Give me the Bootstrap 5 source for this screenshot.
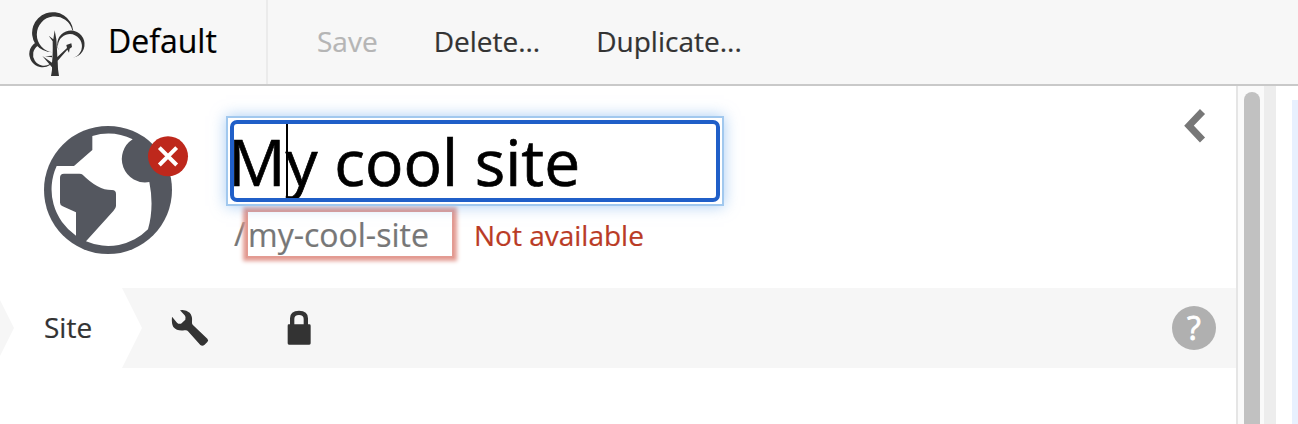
<!DOCTYPE html>
<html lang="en">
<head>
<meta charset="utf-8">
<title>My cool site</title>
<meta name="viewport" content="width=device-width, initial-scale=1">
<link rel="stylesheet" href="https://cdn.jsdelivr.net/npm/bootstrap@5.3.0/dist/css/bootstrap.min.css">
<style>
body{font-family:"Open Sans","Noto Sans",sans-serif;color:#333;background:#fff;height:424px;-webkit-text-stroke:.2px currentColor}
svg{display:block;flex:none}
.topbar{height:86px;background:#f7f7f7;border-bottom:2px solid #c9c9c9}
.brand{width:268px;border-right:2px solid #ebebeb;padding-left:20px;color:#000;font-size:32px}
.brand span{margin-left:13px;line-height:44px;margin-top:-3px}
.act{font-size:28px;line-height:40px;color:#333;margin-top:-2px}
.act[disabled]{color:#b5b5b5;opacity:1}
.form-col{width:1238px;border-right:2px solid #e5e5e5}
.head{height:202px;padding:22px 30px 0 44px}
.globe{margin-top:18px}
.names{margin-left:36px;margin-top:8px}
.name-box{width:498px;height:90px;border:2px solid #a1c8ee;box-shadow:0 0 14px rgba(110,170,235,.6)}
.name-inner{height:82px;margin:2px;position:relative}
.name-inner::after{content:"";position:absolute;inset:0;border:4px solid #205fc8;border-radius:7px}
.name-text{height:78px;width:488px;overflow:hidden;white-space:pre;color:#000;font-size:64px;line-height:84px;text-indent:-2px;-webkit-text-stroke:.7px #000}
.caret{position:absolute;left:56px;top:4px;width:2px;height:74px;background:#000}
.slug{margin:4px 0 0 8px;font-size:32px;line-height:48px;color:#777}
.slash{width:12px}
.slug-box{width:208px;height:48px;border:2px solid #e39b92;box-shadow:0 0 4px 3px #e39b92;background:#fff;line-height:46px;white-space:nowrap}
.names{position:relative}
.name-box{position:relative;z-index:1}
.msg{font-size:28px;color:#ba3b25;margin-left:20px;line-height:50px}
.steps{height:80px;background:#f6f6f6;padding-right:20px}
.site-step{width:142px;height:80px;font-size:28px;padding:0 0 2px 44px;background:#fff;clip-path:polygon(0 0,122px 0,142px 40px,122px 80px,0 80px,0 68px,14px 40px,0 12px)}
.help{width:44px;height:44px;background:#b0b0b0;color:#fff;font-size:32px;-webkit-text-stroke:.9px #fff}
.track{width:26px;background:#fafafa;padding:6px 4px 0 6px}
.thumb{width:16px;border-radius:8px 8px 0 0;background:#c1c1c1}
.gutter{width:12px;background:#ededed}
.preview{width:6px;margin:14px 0 0 16px;background:#e8f0fe}
</style>
</head>
<body class="d-flex flex-column overflow-hidden">
<header class="topbar d-flex flex-shrink-0">
  <div class="brand d-flex align-items-center">
    <svg width="75" height="75" viewBox="0 0 225 225" fill="#333">
      <path d="M46 117A62 62 0 1 1 160 78L157 76A54 54 0 1 0 98 142Q66 141 46 117Z"/>
      <path d="M116 136A41 41 0 1 1 160 158A36 36 0 1 0 116 136Z"/>
      <path d="M46 113A36 36 0 0 0 90 180L90 177A32 32 0 0 1 54 122Z"/>
      <path d="M93 213Q97 193 96 187L67 153L96 173Q99 150 98 109L86 92L100 103L104 76L109 103Q111 130 112 156L141 129L139 120L154 115L156 126L149 131L147 143L142 134L113 167Q113 193 117 213Z"/>
      <path d="M75 154L96 152L96 157Z"/>
    </svg>
    <span>Default</span>
  </div>
  <nav class="d-flex align-items-center">
    <button class="act btn border-0 p-0" style="margin-left:49px" disabled>Save</button>
    <button class="act btn border-0 p-0" style="margin-left:56px">Delete...</button>
    <button class="act btn border-0 p-0" style="margin-left:56px">Duplicate...</button>
  </nav>
</header>
<main class="d-flex flex-grow-1">
  <section class="form-col">
    <div class="head d-flex">
      <svg class="globe" width="146" height="128" viewBox="42 48 438 384">
        <circle cx="234" cy="240" r="192" fill="#54575f"/>
        <path fill="#fff" d="M187 78A168 168 0 0 1 308 88A70 70 0 0 0 358 216Q373 290 354 358A168 168 0 0 1 168 394L250 303Q258 294 258 288V252Q258 240 246 240Q205 241 158 194Q155 191 148 191H102Q90 191 90 203V278Q90 285 98 289L138 307V377A168 168 0 0 1 80 168H132L187 120Z"/>
        <circle cx="414" cy="139" r="60" fill="#be281c"/>
        <path d="M388 113L440 165M440 113L388 165" stroke="#fff" stroke-width="12"/>
      </svg>
      <div class="names">
        <div class="name-box"><div class="name-inner"><div class="name-text">My cool site</div><div class="caret"></div></div></div>
        <div class="slug d-flex"><span class="slash">/</span><div class="slug-box">my-cool-site</div><span class="msg">Not available</span></div>
      </div>
      <svg class="ms-auto" width="22" height="36" viewBox="0 0 22 36"><path d="M18.500 3.500L5 17.700L18.500 32" fill="none" stroke="#777" stroke-width="7"/></svg>
    </div>
    <div class="steps d-flex align-items-center">
      <div class="site-step d-flex align-items-center">Site</div>
      <svg width="38" height="38" viewBox="513 87 114 114" style="margin-left:29px" fill="#333"><path d="M540 91Q557 88 569 98Q578 108 576 126Q575 130 578 134L622 176Q627 181 622 186L613 195Q607 200 601 195L564 154Q561 149 553 151Q531 154 520 141Q514 130 516 110L531 128Q536 133 543 131L556 119Q559 112 554 106Z"/></svg>
      <svg width="26" height="36" viewBox="862 88 78 108" style="margin-left:78px" fill="#333"><path d="M867 131H871V113Q871 90 898 90Q925 90 925 113V131H929Q933 131 933 135V188Q933 192 929 192H868Q864 192 864 188V135Q864 131 867 131ZM884 131H912V115Q912 103 898 103Q884 103 884 115Z"/></svg>
      <div class="help rounded-circle ms-auto d-flex align-items-center justify-content-center">?</div>
    </div>
  </section>
  <div class="track d-flex"><div class="thumb"></div></div>
  <div class="gutter"></div>
  <div class="preview"></div>
</main>
<script src="https://cdn.jsdelivr.net/npm/bootstrap@5.3.0/dist/js/bootstrap.bundle.min.js"></script>
</body>
</html>
